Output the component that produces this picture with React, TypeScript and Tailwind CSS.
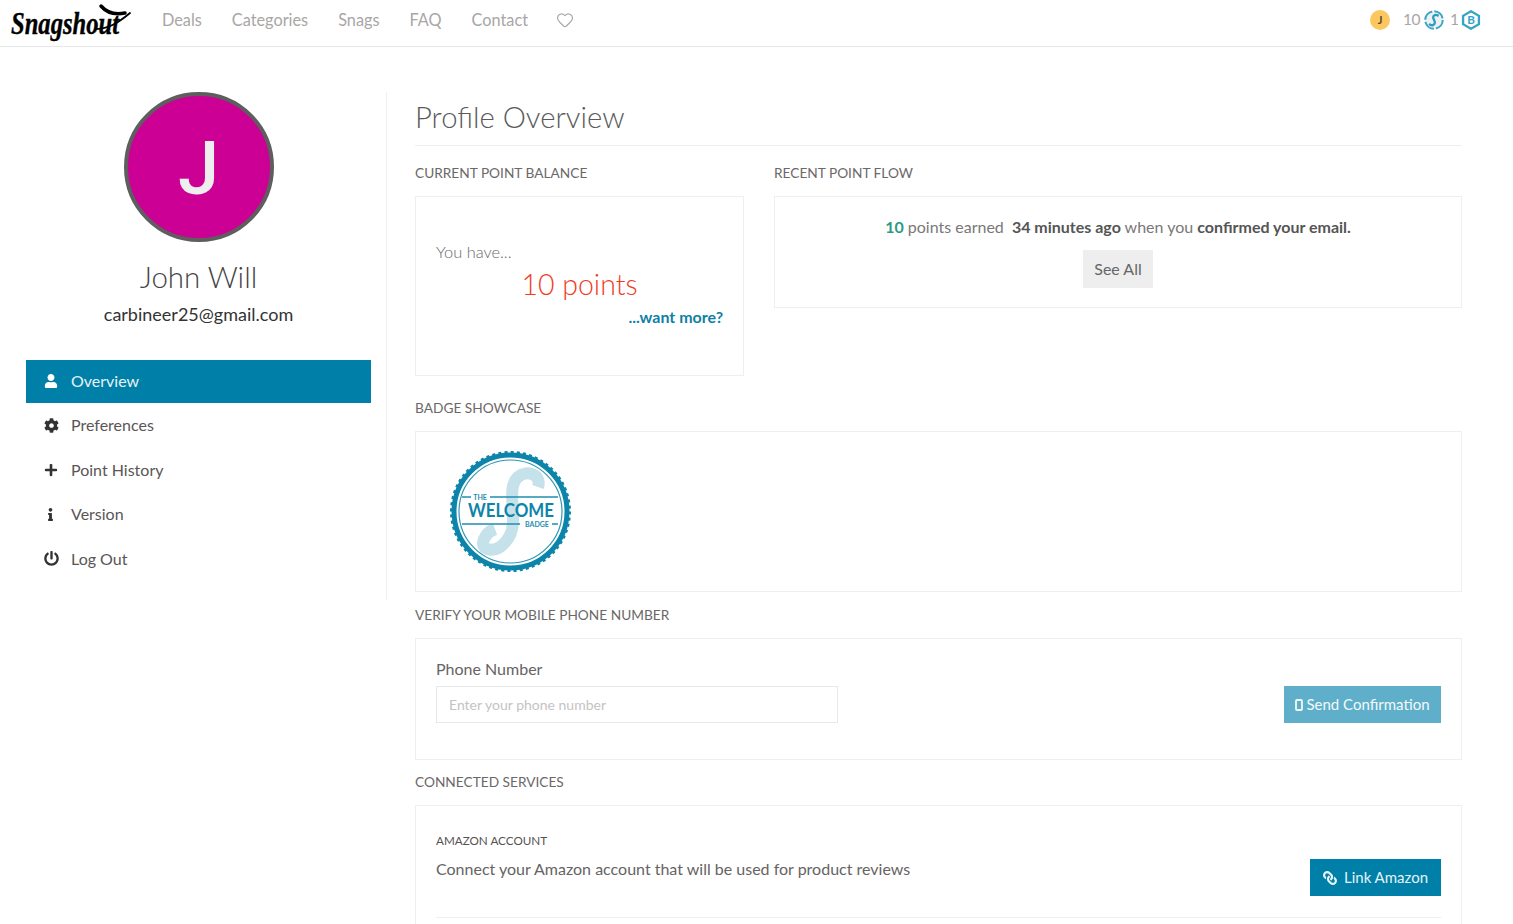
import React from 'react';
import { Heart } from 'lucide-react';
import { FaUser, FaCog, FaPlus, FaInfo, FaPowerOff, FaLink } from 'react-icons/fa';

const font = { fontFamily: 'Lato, "Open Sans", sans-serif' };

const NavLink: React.FC<{ children: React.ReactNode }> = ({ children }) => (
  <a className="text-[16.3px] text-[#a9a6a6]">{children}</a>
);

const SideItem: React.FC<{ icon: React.ReactNode; label: string; active?: boolean }> = ({ icon, label, active = false }) => (
  <div className={`flex items-center h-[43px] mb-[1.5px] pl-[18px] pb-[2px] text-[16px] ${active ? 'bg-[#007fa8] text-[#e6f3f7]' : 'text-[#5a5656]'}`}>
    <span className={`w-[27px] flex ${active ? 'text-white' : 'text-[#333333]'}`}>{icon}</span>
    {label}
  </div>
);

const SectionLabel: React.FC<{ children: React.ReactNode; className?: string }> = ({ children, className = '' }) => (
  <h3 className={`text-[13.7px] leading-[20px] uppercase text-[#6b6868] ${className}`}>{children}</h3>
);

const Panel: React.FC<{ children: React.ReactNode; className?: string }> = ({ children, className = '' }) => (
  <div className={`border border-[#f0efef] ${className}`}>{children}</div>
);

const Logo: React.FC = () => (
  <svg width="121" height="40" viewBox="0 0 121 40" className="overflow-visible">
    <text x="0" y="31" fontSize="31" fontWeight="700" fontStyle="italic" fontFamily='"Liberation Serif", serif' textLength="108" lengthAdjust="spacingAndGlyphs" fill="#000" stroke="#000" strokeWidth="0.4">Snagshout</text>
    <path d="M90 3c6 7 14 9 24 7" fill="none" stroke="#000" strokeWidth="3.500" strokeLinecap="round" />
    <path d="M85 26c12 0 22-6 34-16" fill="none" stroke="#000" strokeWidth="1.800" strokeLinecap="round" />
  </svg>
);

const SLogo: React.FC = () => (
  <svg width="20" height="20" viewBox="0 0 24 24">
    <circle cx="12" cy="12" r="10.500" fill="#edf1f3" stroke="#3ba5c4" strokeWidth="2.500" strokeDasharray="14 2.500" />
    <path d="M16.500 6.500c-3-1.500-5.500 0-5.500 2.500s2.500 3.500 2 6.500-3.500 3.500-6 2" fill="none" stroke="#2b9dc0" strokeWidth="2.800" strokeLinecap="round" />
  </svg>
);

const HexBadge: React.FC = () => (
  <svg width="20" height="20" viewBox="0 0 24 24">
    <path d="M12 1.500 21.500 7v10L12 22.500 2.500 17V7z" fill="none" stroke="#35a5c6" strokeWidth="2.800" />
    <text x="12" y="17" textAnchor="middle" fontSize="14" fontWeight="700" fill="#35a5c6" fontFamily="Lato, sans-serif">B</text>
  </svg>
);

const MobileIcon: React.FC = () => (
  <svg width="8" height="12" viewBox="0 0 8 12">
    <rect x="1" y="1" width="6" height="10" rx="1" fill="none" stroke="currentColor" strokeWidth="1.800" />
  </svg>
);

const WelcomeBadge: React.FC = () => (
  <svg width="121" height="121" viewBox="0 0 121 121">
    <path d="M88 36C92 24 78 18 68 26c-10 9-4 28-5 46-1 16-14 30-26 26-8-3-3-16 8-20" fill="none" stroke="#c5e1ea" strokeWidth="12" />
    <circle cx="60.500" cy="60.500" r="56.500" fill="none" stroke="#0d84a9" strokeWidth="5" />
    <circle cx="60.500" cy="60.500" r="58.500" fill="none" stroke="#0d84a9" strokeWidth="4" strokeDasharray="3 3.120" />
    <circle cx="60.500" cy="60.500" r="51.500" fill="none" stroke="#2f97b6" strokeWidth="1.200" />
    <path d="M12 46h9M40 46h68M12 73h58M102 73h6" stroke="#1f8fb0" strokeWidth="1.300" />
    <text x="30" y="48.500" textAnchor="middle" fontSize="7" fontWeight="700" fill="#1f8fb0" fontFamily="Lato, sans-serif">THE</text>
    <text x="18" y="66" fontSize="19" fontWeight="700" fill="#0d84a9" fontFamily="Lato, sans-serif" textLength="86" lengthAdjust="spacingAndGlyphs">WELCOME</text>
    <text x="87" y="75.500" textAnchor="middle" fontSize="7" fontWeight="700" fill="#1f8fb0" fontFamily="Lato, sans-serif">BADGE</text>
  </svg>
);

export default function App() {
  return (
    <div className="h-screen overflow-hidden bg-white" style={font}>
      <header className="h-[47px] border-b border-[#e7e7e7] flex items-center pl-[11px] pr-[32px]">
        <Logo />
        <nav className="flex items-center gap-[30px] ml-[30px] mb-[6px]">
          <NavLink>Deals</NavLink>
          <NavLink>Categories</NavLink>
          <NavLink>Snags</NavLink>
          <NavLink>FAQ</NavLink>
          <NavLink>Contact</NavLink>
          <Heart size={18} strokeWidth={1.500} className="text-[#a9a6a6] -ml-[2px]" />
        </nav>
        <div className="ml-auto flex items-center mb-[6px] text-[15.5px] text-[#a9a6a6]">
          <div className="w-[20px] h-[20px] rounded-full bg-[#fcc75f] text-[#5d4b2a] text-[11px] font-bold flex items-center justify-center">J</div>
          <span className="ml-[13px] mr-[4px] tracking-[-0.5px]">10</span>
          <SLogo />
          <span className="ml-[6px] mr-[2px]">1</span>
          <HexBadge />
        </div>
      </header>

      <div className="flex items-start pl-[26px] pr-[51px] pt-[45px]">
        <aside className="w-[361px] h-[508px] shrink-0 border-r border-[#efefef] pr-[15px]">
          <div className="flex flex-col items-center">
            <div className="w-[150px] h-[150px] rounded-full bg-[#cc0095] border-[4px] border-[#5e5e5e] flex items-center justify-center pt-[3px] text-[#eeeeee] text-[74px] font-medium leading-none" style={{ fontFamily: 'Roboto, sans-serif' }}>J</div>
            <div className="mt-[16px] text-[29.5px] font-light leading-[38px] text-[#444444]">John Will</div>
            <div className="mt-[5px] text-[18px] leading-[26px] text-[#333333]">carbineer25@gmail.com</div>
          </div>
          <nav className="mt-[33px]">
            <SideItem active icon={<FaUser size={14} />} label="Overview" />
            <SideItem icon={<FaCog size={15} />} label="Preferences" />
            <SideItem icon={<FaPlus size={14} />} label="Point History" />
            <SideItem icon={<FaInfo size={13} />} label="Version" />
            <SideItem icon={<FaPowerOff size={15} />} label="Log Out" />
          </nav>
        </aside>

        <main className="flex-1 ml-[28px]">
          <h1 className="text-[29.3px] leading-[50px] font-light text-[#5a5a5a] pb-[3px] border-b border-[#f0efef]">Profile Overview</h1>

          <div className="flex gap-[30px] mt-[17px]">
            <div className="w-[329px] shrink-0">
              <SectionLabel>Current Point Balance</SectionLabel>
              <Panel className="mt-[13px] h-[180px] px-[20px] pt-[44px]">
                <div className="text-[16.4px] leading-[22px] font-light text-[#6b6868]">You have...</div>
                <div className="text-center text-[28.5px] font-light leading-[40px] mt-[1px] text-[#f03d1f]">10 points</div>
                <div className="text-right text-[16px] leading-[22px] mt-[2px] font-bold text-[#0f7fa5]">...want more?</div>
              </Panel>
            </div>
            <div className="flex-1">
              <SectionLabel>Recent Point Flow</SectionLabel>
              <Panel className="mt-[13px] h-[112px] pt-[19px] flex flex-col items-center">
                <p className="text-[16px] leading-[22px] text-[#7a7777]">
                  <b className="text-[#2c9a86]">10</b> points earned <b className="ml-[4px] text-[#555555]">34 minutes ago</b> when you <b className="text-[#555555]">confirmed your email.</b>
                </p>
                <button className="mt-[12px] h-[38px] w-[70px] bg-[#eeeeee] text-[16px] text-[#666666]">See All</button>
              </Panel>
            </div>
          </div>

          <SectionLabel className="mt-[22px]">Badge Showcase</SectionLabel>
          <Panel className="mt-[13px] h-[161px] pl-[34px] pt-[19px]">
            <WelcomeBadge />
          </Panel>

          <SectionLabel className="mt-[13px]">Verify Your Mobile Phone Number</SectionLabel>
          <Panel className="mt-[13px] h-[122px] px-[20px] pt-[18px] flex justify-between">
            <div>
              <label className="block text-[16px] leading-[24px] text-[#666363]">Phone Number</label>
              <input readOnly placeholder="Enter your phone number" className="mt-[5px] w-[402px] h-[37px] border border-[#e8e8e8] px-[12px] text-[14px] placeholder-[#c5c3c3] outline-none" />
            </div>
            <button className="self-end mb-[36px] h-[37px] w-[157px] bg-[#5fafca] text-[#f2f9fb] text-[15px] flex items-center justify-center gap-[3px]">
              <MobileIcon />Send Confirmation
            </button>
          </Panel>

          <SectionLabel className="mt-[12px]">Connected Services</SectionLabel>
          <Panel className="mt-[13px] h-[140px] px-[20px] pt-[25px]">
            <div className="flex justify-between items-start pb-[21px] border-b border-[#f0efef]">
              <div>
                <div className="text-[11.7px] leading-[18px] uppercase text-[#555252]">Amazon Account</div>
                <p className="mt-[8px] text-[16px] leading-[24px] text-[#666363]">Connect your Amazon account that will be used for product reviews</p>
              </div>
              <button className="mt-[28px] h-[37px] w-[131px] bg-[#007fa8] text-[#e6f3f7] text-[15px] flex items-center justify-center gap-[7px]">
                <FaLink size={14} className="-scale-x-100" />Link Amazon
              </button>
            </div>
          </Panel>
        </main>
      </div>
    </div>
  );
}
